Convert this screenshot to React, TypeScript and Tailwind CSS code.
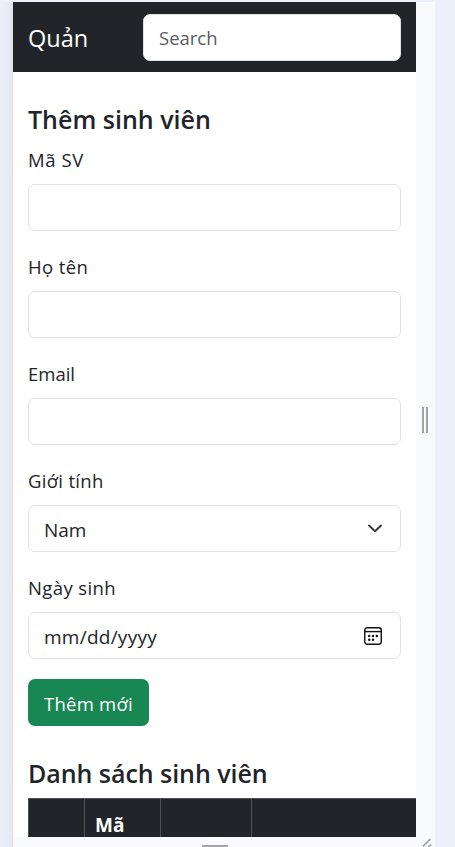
import type { ReactNode } from "react";

const control =
  "flex h-[47px] w-full items-center rounded-[7px] border border-[#dee2e6] bg-white px-[15px] text-[19px] leading-[28px] text-[#212529] outline-none";

function Field({ label, children, tracking = "tracking-normal" }: { label: string; children: ReactNode; tracking?: string }) {
  return (
    <div className="mb-5 flex h-[87px] flex-col justify-between">
      <label className={`h-[30px] pt-px text-[18.5px] leading-[30px] ${tracking}`}>{label}</label>
      {children}
    </div>
  );
}

function Chevron() {
  return (
    <svg className="mr-[3px] mb-[2px] h-[14px] w-[14px]" viewBox="0 0 14 14" fill="none" stroke="#343a40" strokeWidth="1.9" strokeLinecap="round" strokeLinejoin="round">
      <path d="M1 4.5 7 10.3 13 4.5" />
    </svg>
  );
}

function CalendarIcon() {
  return (
    <svg className="mr-[3px] h-[18px] w-[18px]" viewBox="0 0 18 18" fill="none">
      <rect x="0.75" y="0.75" width="16.5" height="16.5" rx="2.4" stroke="#111" strokeWidth="1.4" />
      <path d="M1 4.6H17" stroke="#111" strokeWidth="1.4" />
      <g fill="#111">
        <circle cx="5.2" cy="9" r="1.2" />
        <circle cx="9" cy="9" r="1.2" />
        <circle cx="12.8" cy="9" r="1.2" />
        <circle cx="5.2" cy="12.8" r="1.2" />
        <circle cx="9" cy="12.8" r="1.2" />
      </g>
    </svg>
  );
}

export default function App() {
  return (
    <div className="flex h-[847px] w-[455px] overflow-hidden bg-[#ebf0f9] pt-[2px] font-['Open_Sans','Noto_Sans',sans-serif] text-[#212529]">
      <div className="w-[13px] shrink-0 border-r border-[#dde1e6] bg-linear-to-r from-[#ebf0f9] to-[#e4e9f1]" />
      <div className="flex w-[422px] shrink-0 flex-col bg-[#f8fafe]">
        <div className="flex h-[835px] shrink-0">
          <main className="h-full w-[403px] shrink-0 overflow-hidden bg-white">
            <nav className="flex h-[70px] items-center justify-between bg-[#212529] px-[15px]">
              <span className="pt-px text-[23.5px] leading-[36px] text-white">Quản</span>
              <input className="h-[47px] w-[258px] rounded-[7px] border border-[#dee2e6] bg-white px-[15px] text-[18.5px] outline-none placeholder:text-[#595c5f]" placeholder="Search" />
            </nav>
            <div className="px-[15px] pt-[31px]">
              <h4 className="h-[41px] text-[25px] leading-[32px] font-semibold whitespace-nowrap">Thêm sinh viên</h4>
              <form>
                <Field label="Mã SV" tracking="tracking-[0.6px]"><input className={control} /></Field>
                <Field label="Họ tên" tracking="tracking-[0.4px]"><input className={control} /></Field>
                <Field label="Email"><input className={control} /></Field>
                <Field label="Giới tính" tracking="tracking-[0.3px]">
                  <div className={control}><span className="grow pt-[3px]">Nam</span><Chevron /></div>
                </Field>
                <Field label="Ngày sinh" tracking="tracking-[0.4px]">
                  <div className={control}><span className="grow pt-[3px] tracking-[0.25px]">mm/dd/yyyy</span><CalendarIcon /></div>
                </Field>
                <button type="button" className="flex h-[47px] w-[121px] items-center justify-center rounded-[7px] bg-[#198754] pt-[3px] text-[18.5px] tracking-[0.25px] whitespace-nowrap text-white">Thêm mới</button>
              </form>
              <h4 className="mt-[31px] h-[41px] text-[25px] leading-[32px] font-semibold tracking-[-0.05px] whitespace-nowrap">Danh sách sinh viên</h4>
              <div className="grid h-[76px] w-[520px] grid-cols-[56px_76px_91px_1fr] border-t border-l border-[#4d5154] bg-[#212529] text-[18.5px] leading-[28px] font-bold text-white">
                <div className="border-r border-[#4d5154]" />
                <div className="border-r border-[#4d5154] px-[10px] pt-[12px] text-[19px]">Mã</div>
                <div className="border-r border-[#4d5154]" />
                <div />
              </div>
            </div>
          </main>
          <div className="flex w-[19px] items-center gap-[2px] pl-[6px]">
            <span className="h-[26px] w-[2px] bg-[#a2a4a3]" />
            <span className="h-[26px] w-[2px] bg-[#a2a4a3]" />
          </div>
        </div>
        <div className="flex h-[10px] items-end justify-between pl-[189px]">
          <span className="h-[2px] w-[26px] bg-[#a5a7a8]" />
          <svg className="mr-[3px] h-[10px] w-[10px]" viewBox="0 0 10 10" stroke="#a5a7a8" strokeWidth="1.8">
            <path d="M1 9.5 8.5 2M6.5 10 9 7.5" />
          </svg>
        </div>
      </div>
    </div>
  );
}
